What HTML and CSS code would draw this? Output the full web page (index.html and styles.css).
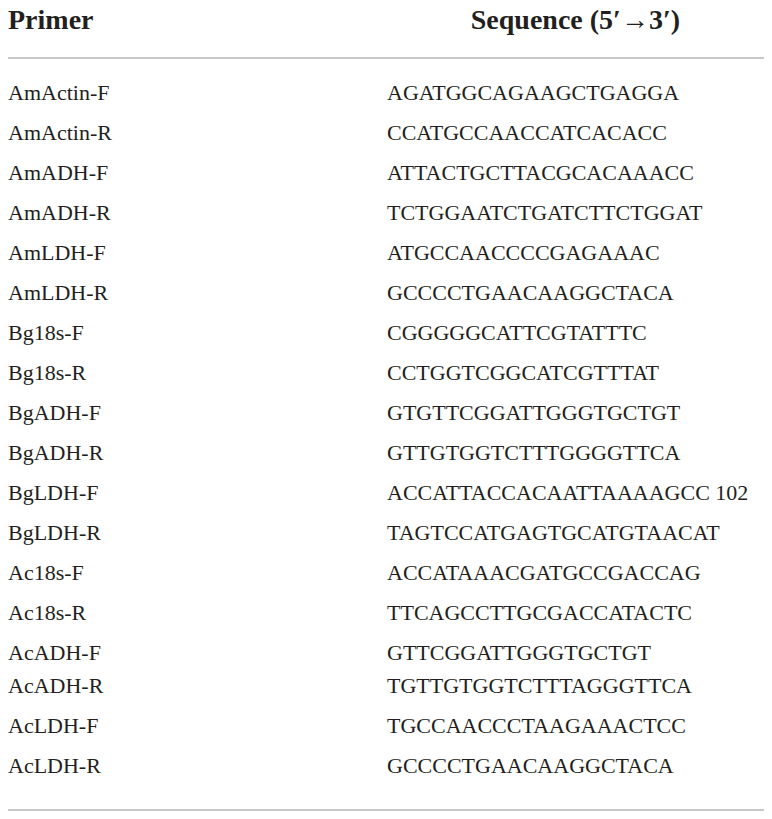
FILE: index.html
```html
<!DOCTYPE html>
<html>
<head>
<meta charset="utf-8">
<link rel="stylesheet" href="styles.css">
</head>
<body>
<div class="table">
  <div class="head">
    <div class="h1">Primer</div>
    <div class="h2">Sequence (5′→3′)</div>
  </div>
  <div class="rule top"></div>
  <div class="body">
    <div class="row"><div>AmActin-F</div><div>AGATGGCAGAAGCTGAGGA</div></div>
    <div class="row"><div>AmActin-R</div><div>CCATGCCAACCATCACACC</div></div>
    <div class="row"><div>AmADH-F</div><div>ATTACTGCTTACGCACAAACC</div></div>
    <div class="row"><div>AmADH-R</div><div>TCTGGAATCTGATCTTCTGGAT</div></div>
    <div class="row"><div>AmLDH-F</div><div>ATGCCAACCCCGAGAAAC</div></div>
    <div class="row"><div>AmLDH-R</div><div>GCCCCTGAACAAGGCTACA</div></div>
    <div class="row"><div>Bg18s-F</div><div>CGGGGGCATTCGTATTTC</div></div>
    <div class="row"><div>Bg18s-R</div><div>CCTGGTCGGCATCGTTTAT</div></div>
    <div class="row"><div>BgADH-F</div><div>GTGTTCGGATTGGGTGCTGT</div></div>
    <div class="row"><div>BgADH-R</div><div>GTTGTGGTCTTTGGGGTTCA</div></div>
    <div class="row"><div>BgLDH-F</div><div>ACCATTACCACAATTAAAAGCC 102</div></div>
    <div class="row"><div>BgLDH-R</div><div>TAGTCCATGAGTGCATGTAACAT</div></div>
    <div class="row"><div>Ac18s-F</div><div>ACCATAAACGATGCCGACCAG</div></div>
    <div class="row"><div>Ac18s-R</div><div>TTCAGCCTTGCGACCATACTC</div></div>
    <div class="row tight"><div>AcADH-F</div><div>GTTCGGATTGGGTGCTGT</div></div>
    <div class="row"><div>AcADH-R</div><div>TGTTGTGGTCTTTAGGGTTCA</div></div>
    <div class="row"><div>AcLDH-F</div><div>TGCCAACCCTAAGAAACTCC</div></div>
    <div class="row"><div>AcLDH-R</div><div>GCCCCTGAACAAGGCTACA</div></div>
  </div>
  <div class="rule bottom"></div>
</div>
</body>
</html>
```

FILE: styles.css
```css
html, body {
  margin: 0;
  padding: 0;
  background: #ffffff;
}

body {
  font-family: "Liberation Serif", "Times New Roman", serif;
  color: #231f20;
}

.table {
  padding: 0 8px;
  width: 756px;
}

.head {
  display: grid;
  grid-template-columns: 379px 1fr;
  font-size: 28px;
  font-weight: bold;
  line-height: 40px;
  height: 40px;
}

.h2 {
  text-align: center;
}

.rule {
  height: 2px;
  background: #c9c9c9;
}

.rule.top {
  margin-top: 17px;
}

.body {
  padding-top: 14px;
  font-size: 22px;
  line-height: 40px;
}

.row {
  display: grid;
  grid-template-columns: 379px 1fr;
  height: 40px;
  white-space: nowrap;
}

.row.tight {
  height: 33px;
}

.rule.bottom {
  margin-top: 23px;
}
```
